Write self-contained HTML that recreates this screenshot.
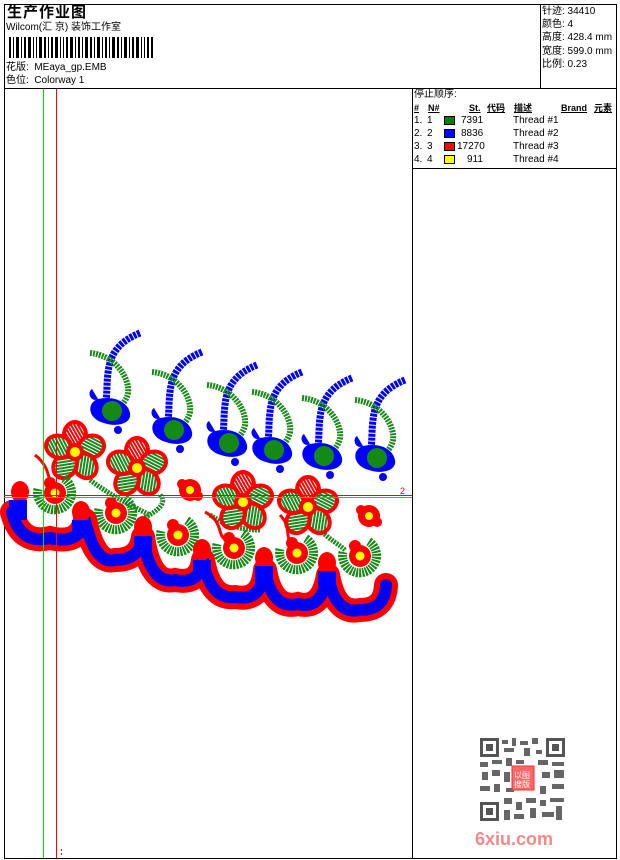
<!DOCTYPE html>
<html><head><meta charset="utf-8"><style>
*{margin:0;padding:0;box-sizing:border-box}
body{width:620px;height:860px;background:#fff;position:relative;overflow:hidden;font-family:"Liberation Sans","Noto Sans CJK SC",sans-serif;color:#000}
.a{position:absolute}
.t{font-size:10px;line-height:12px;white-space:nowrap}
</style></head><body>
<div class="a" style="left:4px;top:4px;width:613px;height:855px;border:1px solid #000"></div>
<div class="a" style="left:4px;top:88px;width:613px;height:1px;background:#000"></div>
<div class="a" style="left:540px;top:4px;width:1px;height:84px;background:#000"></div>
<div class="a" style="left:412px;top:88px;width:1px;height:771px;background:#000"></div>
<div class="a" style="left:412px;top:168px;width:205px;height:1px;background:#000"></div>

<div class="a" style="left:7px;top:3px;font-size:15px;font-weight:bold;line-height:18px;letter-spacing:1px;font-family:'Noto Sans CJK SC','WenQuanYi Zen Hei',sans-serif">生产作业图</div>
<div class="a t" style="left:6px;top:22px">Wilcom(汇 京) 装饰工作室</div>
<svg class="a" style="left:9px;top:37px" width="145" height="21">
<g fill="#000">
<rect x="0" y="0" width="2" height="21"/><rect x="4" y="0" width="1" height="21"/><rect x="7" y="0" width="3" height="21"/><rect x="12" y="0" width="1" height="21"/><rect x="15" y="0" width="2" height="21"/><rect x="19" y="0" width="3" height="21"/><rect x="24" y="0" width="1" height="21"/><rect x="27" y="0" width="1" height="21"/><rect x="30" y="0" width="3" height="21"/><rect x="35" y="0" width="2" height="21"/><rect x="39" y="0" width="1" height="21"/><rect x="42" y="0" width="2" height="21"/><rect x="46" y="0" width="3" height="21"/><rect x="51" y="0" width="1" height="21"/><rect x="54" y="0" width="1" height="21"/><rect x="57" y="0" width="2" height="21"/><rect x="61" y="0" width="3" height="21"/><rect x="66" y="0" width="1" height="21"/><rect x="69" y="0" width="2" height="21"/><rect x="73" y="0" width="1" height="21"/><rect x="76" y="0" width="3" height="21"/><rect x="81" y="0" width="2" height="21"/><rect x="85" y="0" width="1" height="21"/><rect x="88" y="0" width="3" height="21"/><rect x="93" y="0" width="1" height="21"/><rect x="96" y="0" width="2" height="21"/><rect x="100" y="0" width="1" height="21"/><rect x="103" y="0" width="3" height="21"/><rect x="108" y="0" width="2" height="21"/><rect x="112" y="0" width="1" height="21"/><rect x="115" y="0" width="3" height="21"/><rect x="120" y="0" width="1" height="21"/><rect x="123" y="0" width="2" height="21"/><rect x="127" y="0" width="3" height="21"/><rect x="132" y="0" width="1" height="21"/><rect x="135" y="0" width="1" height="21"/><rect x="138" y="0" width="2" height="21"/><rect x="142" y="0" width="2" height="21"/>
</g></svg>
<div class="a t" style="left:6px;top:62px">花版:&nbsp; MEaya_gp.EMB</div>
<div class="a t" style="left:6px;top:75px">色位:&nbsp; Colorway 1</div>

<div class="a t" style="left:542px;top:5px;line-height:13.2px">针迹: 34410<br>颜色: 4<br>高度: 428.4 mm<br>宽度: 599.0 mm<br>比例: 0.23</div>

<div class="a t" style="left:414px;top:89px">停止顺序:</div>
<div class="a t" style="left:414px;top:102px;font-weight:bold;font-size:9px">
<span class="a" style="left:0;text-decoration:underline">#</span>
<span class="a" style="left:14px;text-decoration:underline">N#</span>
<span class="a" style="left:55px;text-decoration:underline">St.</span>
<span class="a" style="left:73px;text-decoration:underline">代码</span>
<span class="a" style="left:100px;text-decoration:underline">描述</span>
<span class="a" style="left:147px;text-decoration:underline">Brand</span>
<span class="a" style="left:180px;text-decoration:underline">元素</span>
</div>
<div class="a t" style="left:414px;top:115px;width:200px">
<div style="position:relative;height:13px"><span class="a" style="left:0">1.</span><span class="a" style="left:13px">1</span><span class="a" style="left:30px;top:1px;width:11px;height:9px;background:#008000;border:1px solid #000"></span><span class="a" style="left:47px">7391</span><span class="a" style="left:99px">Thread #1</span></div>
<div style="position:relative;height:13px"><span class="a" style="left:0">2.</span><span class="a" style="left:13px">2</span><span class="a" style="left:30px;top:1px;width:11px;height:9px;background:#00f;border:1px solid #000"></span><span class="a" style="left:47px">8836</span><span class="a" style="left:99px">Thread #2</span></div>
<div style="position:relative;height:13px"><span class="a" style="left:0">3.</span><span class="a" style="left:13px">3</span><span class="a" style="left:30px;top:1px;width:11px;height:9px;background:#f00;border:1px solid #000"></span><span class="a" style="left:43px">17270</span><span class="a" style="left:99px">Thread #3</span></div>
<div style="position:relative;height:13px"><span class="a" style="left:0">4.</span><span class="a" style="left:13px">4</span><span class="a" style="left:30px;top:1px;width:11px;height:9px;background:#ff0;border:1px solid #000"></span><span class="a" style="left:53px">911</span><span class="a" style="left:99px">Thread #4</span></div>
</div>

<svg class="a" style="left:0;top:0" width="412" height="860">
<defs>
<pattern id="hg" width="3" height="3" patternUnits="userSpaceOnUse" patternTransform="rotate(45)">
<rect width="3" height="3" fill="#fff"/><rect width="2" height="3" fill="#1a8a1a"/></pattern>
<pattern id="hr" width="3" height="3" patternUnits="userSpaceOnUse" patternTransform="rotate(-30)">
<rect width="3" height="3" fill="#fff"/><rect width="2" height="3" fill="#f00"/></pattern>
<g id="fl">
<g fill="url(#hg)" stroke="#f00" stroke-width="4">
<ellipse cx="0" cy="-17" rx="11" ry="13" fill="url(#hr)"/>
<ellipse cx="0" cy="-17" rx="11" ry="13" transform="rotate(72)"/>
<ellipse cx="0" cy="-17" rx="11" ry="13" transform="rotate(144)"/>
<ellipse cx="0" cy="-17" rx="11" ry="13" transform="rotate(216)"/>
<ellipse cx="0" cy="-17" rx="11" ry="13" transform="rotate(288)"/>
</g>
<circle r="9" fill="#f00"/><circle r="5" fill="#ff0"/>
</g>
<g id="rf">
<path d="M-17,-4 A17,17 0 1 0 8,-15" fill="none" stroke="#138a13" stroke-width="9" stroke-dasharray="2 1"/>
<circle r="11" fill="#f00"/><circle cx="-5" cy="-10" r="6" fill="#f00"/><circle r="4.5" fill="#ff0"/>
</g>
<g id="sf"><circle r="11" fill="#f00"/><circle cx="-8" cy="-6" r="5" fill="#f00"/><circle cx="8" cy="6" r="5" fill="#f00"/><circle r="4" fill="#ff0"/></g>
<g id="sp">
<path d="M50,0 C30,8 20,20 18,40 C16,55 18,65 14,75" fill="none" stroke="#00f" stroke-width="7" stroke-dasharray="3 1"/>
<path d="M0,20 C25,22 40,45 38,60 C36,70 28,75 25,78" fill="none" stroke="#1a8a1a" stroke-width="6" stroke-dasharray="2 1"/>
<path d="M8,66 C-4,70 -2,86 14,90 C24,94 42,92 40,80 C38,70 26,62 8,66Z" fill="#00f"/>
<path d="M2,56 C-4,60 2,70 8,66Z" fill="#00f"/>
<circle cx="22" cy="78" r="10" fill="#138a13"/>
<circle cx="28" cy="97" r="4" fill="#00f"/>
</g>
</defs>
<!-- sprigs -->
<use href="#sp" x="90" y="333"/>
<use href="#sp" x="152" y="352"/>
<use href="#sp" x="207" y="365"/>
<use href="#sp" x="252" y="372"/>
<use href="#sp" x="302" y="378"/>
<use href="#sp" x="355" y="380"/>
<!-- stems / leaves -->
<path d="M90,480 C110,495 130,505 150,515 M160,495 C170,505 150,515 140,520 M210,515 C225,525 240,530 260,530 M320,530 C330,540 340,545 345,550" stroke="#1a8a1a" stroke-width="5" fill="none" stroke-dasharray="2 1"/>
<path d="M35,455 C55,470 45,490 60,495 M205,512 C230,525 210,545 240,540 M280,515 C295,530 280,545 300,545" stroke="#f00" stroke-width="3" fill="none"/>
<!-- flowers -->
<use href="#fl" x="75" y="452"/>
<use href="#fl" x="137" y="468"/>
<use href="#fl" x="243" y="502"/>
<use href="#fl" x="308" y="507"/>
<use href="#sf" x="190" y="490"/>
<use href="#sf" x="369" y="516"/>
<use href="#rf" x="55" y="493"/>
<use href="#rf" x="116" y="513"/>
<use href="#rf" x="178" y="535"/>
<use href="#rf" x="234" y="548"/>
<use href="#rf" x="297" y="553"/>
<use href="#rf" x="360" y="556"/>
<!-- scallop band -->
<g fill="none" stroke-linecap="round">
<path d="M12,512 Q20,545 50,538 Q80,545 85,520 M85,520 Q95,565 115,560 Q140,560 143,537 M143,537 Q150,585 175,580 Q200,585 203,560 M203,560 Q210,600 235,597 Q262,602 265,570 M265,570 Q272,610 298,604 Q322,610 328,575 M328,575 Q335,615 360,610 Q385,610 386,585" stroke="#f00" stroke-width="24"/>
<path d="M12,512 Q20,545 50,538 Q80,545 85,520 M85,520 Q95,565 115,560 Q140,560 143,537 M143,537 Q150,585 175,580 Q200,585 203,560 M203,560 Q210,600 235,597 Q262,602 265,570 M265,570 Q272,610 298,604 Q322,610 328,575 M328,575 Q335,615 360,610 Q385,610 386,585" stroke="#0000f0" stroke-width="12"/>
</g>
<g fill="#f00">
<ellipse cx="20" cy="492" rx="9" ry="11"/><ellipse cx="81" cy="512" rx="9" ry="11"/><ellipse cx="143" cy="527" rx="9" ry="11"/><ellipse cx="202" cy="550" rx="9" ry="11"/><ellipse cx="264" cy="558" rx="9" ry="11"/><ellipse cx="327" cy="563" rx="9" ry="11"/>
</g>
<g fill="#00f"><rect x="9" y="500" width="18" height="20"/><rect x="72" y="520" width="18" height="18"/><rect x="134" y="536" width="18" height="16"/><rect x="193" y="560" width="18" height="18"/><rect x="255" y="566" width="18" height="18"/><rect x="318" y="571" width="18" height="16"/></g>
<!-- guide lines -->
<line x1="43.5" y1="89" x2="43.5" y2="858" stroke="#00e000" stroke-width="1"/>
<line x1="56.5" y1="89" x2="56.5" y2="858" stroke="#f00" stroke-width="1"/>
<line x1="4" y1="495.5" x2="412" y2="495.5" stroke="#f00" stroke-width="1"/>
<line x1="4" y1="497.5" x2="412" y2="497.5" stroke="#00e000" stroke-width="1"/>
<text x="400" y="494" font-size="9" fill="#f00" font-family="Liberation Sans">2</text>
<rect x="61" y="849" width="1" height="2" fill="#f00"/><rect x="61" y="853" width="1" height="2" fill="#f00"/>
</svg>

<!-- QR watermark -->
<svg class="a" style="left:480px;top:738px" width="88" height="85">
<g fill="#555">
<rect x="0" y="0" width="19" height="19"/><rect x="66" y="0" width="19" height="19"/><rect x="0" y="64" width="19" height="19"/>
</g>
<g fill="#fff"><rect x="3" y="3" width="13" height="13"/><rect x="69" y="3" width="13" height="13"/><rect x="3" y="67" width="13" height="13"/></g>
<g fill="#555"><rect x="6" y="6" width="7" height="7"/><rect x="72" y="6" width="7" height="7"/><rect x="6" y="70" width="7" height="7"/></g>
<g fill="#666">
<rect x="22" y="2" width="6" height="4"/><rect x="32" y="0" width="4" height="8"/><rect x="40" y="3" width="8" height="4"/><rect x="52" y="0" width="6" height="6"/><rect x="24" y="10" width="10" height="4"/><rect x="44" y="10" width="6" height="8"/><rect x="56" y="12" width="6" height="4"/>
<rect x="0" y="24" width="8" height="5"/><rect x="12" y="22" width="10" height="4"/><rect x="26" y="20" width="6" height="8"/><rect x="36" y="22" width="8" height="4"/><rect x="58" y="22" width="10" height="5"/><rect x="72" y="24" width="12" height="4"/>
<rect x="2" y="34" width="6" height="8"/><rect x="12" y="32" width="8" height="6"/><rect x="24" y="34" width="6" height="10"/><rect x="62" y="34" width="8" height="6"/><rect x="74" y="32" width="10" height="8"/>
<rect x="0" y="48" width="10" height="5"/><rect x="14" y="46" width="6" height="8"/><rect x="26" y="50" width="8" height="4"/><rect x="60" y="48" width="6" height="8"/><rect x="72" y="46" width="12" height="5"/>
<rect x="24" y="60" width="8" height="6"/><rect x="36" y="64" width="6" height="8"/><rect x="46" y="60" width="10" height="5"/><rect x="60" y="62" width="6" height="6"/><rect x="70" y="60" width="14" height="4"/>
<rect x="24" y="72" width="6" height="10"/><rect x="34" y="76" width="10" height="5"/><rect x="50" y="70" width="6" height="10"/><rect x="62" y="74" width="12" height="5"/><rect x="76" y="68" width="6" height="14"/>
</g>
<rect x="32" y="28" width="22" height="24" fill="#f66" stroke="#e33"/>
<text x="34" y="40" font-size="8" fill="#fff" font-family="Noto Sans CJK SC,sans-serif">以图</text>
<text x="34" y="49" font-size="8" fill="#fff" font-family="Noto Sans CJK SC,sans-serif">搜版</text>
</svg>
<div class="a" style="left:475px;top:828px;font-size:18px;font-weight:bold;color:#f28a8a;font-family:'Liberation Sans',sans-serif;line-height:22px">6xiu.com</div>
</body></html>
